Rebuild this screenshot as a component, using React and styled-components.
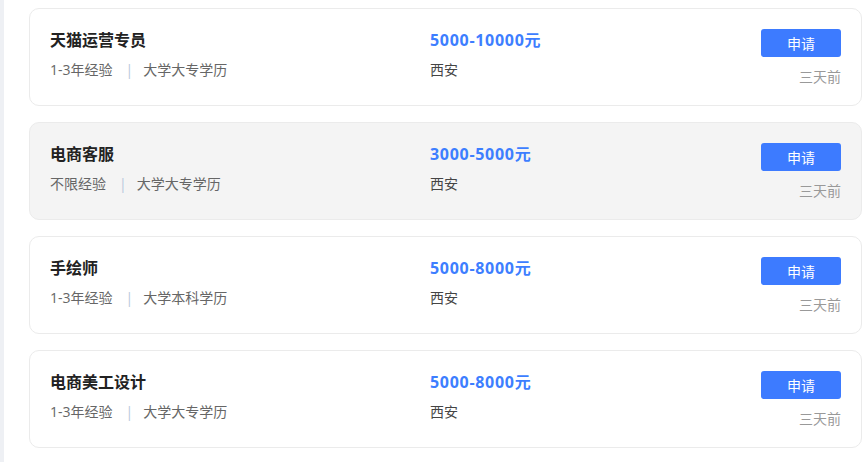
import React from 'react'
import styled, { createGlobalStyle } from 'styled-components'

const GlobalStyle = createGlobalStyle`
  body {
    margin: 0;
    background: #fff;
    font-family: "Open Sans", "Noto Sans CJK SC", sans-serif;
  }
`

const jobs = [
  { title: '天猫运营专员', exp: '1-3年经验', edu: '大学大专学历', salary: '5000-10000元', city: '西安', time: '三天前' },
  { title: '电商客服', exp: '不限经验', edu: '大学大专学历', salary: '3000-5000元', city: '西安', time: '三天前', active: true },
  { title: '手绘师', exp: '1-3年经验', edu: '大学本科学历', salary: '5000-8000元', city: '西安', time: '三天前' },
  { title: '电商美工设计', exp: '1-3年经验', edu: '大学大专学历', salary: '5000-8000元', city: '西安', time: '三天前' },
]

export default function App() {
  return (
    <Page>
      <GlobalStyle />
      <Strip />
      <List>
        {jobs.map((o, i) => (
          <Card key={i} $active={o.active}>
            <Col>
              <Title>{o.title}</Title>
              <Meta>
                {o.exp}
                <Sep>|</Sep>
                {o.edu}
              </Meta>
            </Col>
            <Col>
              <Salary>{o.salary}</Salary>
              <City>{o.city}</City>
            </Col>
            <Side>
              <Apply>申请</Apply>
              <Time>{o.time}</Time>
            </Side>
          </Card>
        ))}
      </List>
    </Page>
  )
}

const Page = styled.div`
  display: flex;
  min-height: 462px;
`

const Strip = styled.div`
  width: 4px;
  flex: none;
  background: #eef0f4;
`

const List = styled.div`
  flex: 1;
  display: flex;
  flex-direction: column;
  gap: 16px;
  padding: 8px 4px 0 25px;
`

const Card = styled.div`
  box-sizing: border-box;
  height: 98px;
  display: grid;
  grid-template-columns: 380px 1fr auto;
  padding: 20px 20px 0 20px;
  border: 1px solid #ebebeb;
  border-radius: 10px;
  background: ${p => (p.$active ? '#f4f4f4' : '#fff')};
`

const Col = styled.div`
  display: flex;
  flex-direction: column;
`

const Title = styled.div`
  font-size: 16px;
  line-height: 22px;
  font-weight: 700;
  color: #222;
`

const Meta = styled.div`
  margin-top: 9px;
  font-size: 14px;
  line-height: 20px;
  color: #666;
`

const Sep = styled.span`
  margin: 0 10px 0 13px;
  color: #b8c8dc;
`

const Salary = styled.div`
  font-size: 16px;
  line-height: 22px;
  font-weight: 700;
  letter-spacing: 0.7px;
  color: #3d7eff;
`

const City = styled.div`
  margin-top: 9px;
  font-size: 14px;
  line-height: 20px;
  color: #444;
`

const Side = styled.div`
  display: flex;
  flex-direction: column;
  align-items: flex-end;
`

const Apply = styled.button`
  width: 80px;
  height: 28px;
  border: none;
  border-radius: 3px;
  background: #3d7bff;
  color: #fff;
  font-family: inherit;
  font-size: 14px;
  padding: 0;
  cursor: pointer;
`

const Time = styled.div`
  margin-top: 10px;
  font-size: 14px;
  line-height: 20px;
  color: #999;
`
